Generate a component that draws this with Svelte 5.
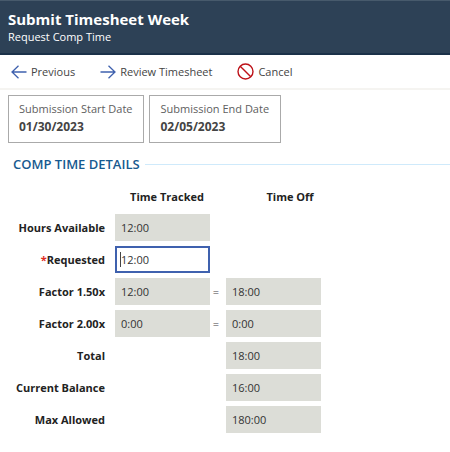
<script>
  const dates = [
    { label: 'Submission Start Date', value: '01/30/2023' },
    { label: 'Submission End Date', value: '02/05/2023' }
  ];

  let requested = $state('12:00');

  const rows = [
    { id: 'available', label: 'Hours Available', tracked: '12:00' },
    { id: 'requested', label: 'Requested', required: true },
    { id: 'factor150', label: 'Factor 1.50x', tracked: '12:00', off: '18:00' },
    { id: 'factor200', label: 'Factor 2.00x', tracked: '0:00', off: '0:00' },
    { id: 'total', label: 'Total', off: '18:00' },
    { id: 'balance', label: 'Current Balance', off: '16:00' },
    { id: 'max', label: 'Max Allowed', off: '180:00' }
  ];
</script>

<div class="page">
  <header>
    <h1>Submit Timesheet Week</h1>
    <p>Request Comp Time</p>
  </header>

  <nav>
    <button type="button">
      <svg class="arrow" width="16" height="14" viewBox="0 0 16 14"><path d="M15.5 7H1M7.5 .7L1 7l6.500 6.300" /></svg>
      Previous
    </button>
    <button type="button">
      <svg class="arrow" width="16" height="14" viewBox="0 0 16 14"><path d="M.5 7H15M8.500 .7L15 7l-6.500 6.300" /></svg>
      Review Timesheet
    </button>
    <button type="button">
      <svg class="stop" width="17" height="17" viewBox="0 0 17 17"><circle cx="8.500" cy="8.500" r="7.500" /><path d="M3.200 3.200L13.800 13.800" /></svg>
      Cancel
    </button>
  </nav>

  <main>
    <dl class="dates">
      {#each dates as date}
        <div class="card">
          <dt>{date.label}</dt>
          <dd>{date.value}</dd>
        </div>
      {/each}
    </dl>

    <section>
      <h2>COMP TIME DETAILS</h2>
      <form>
        <div class="row head">
          <span></span>
          <strong>Time Tracked</strong>
          <span></span>
          <strong>Time Off</strong>
        </div>
        {#each rows as row}
          <div class="row">
            <label for={row.id}>{#if row.required}<span class="star">*</span>{/if}{row.label}</label>
            {#if row.required}
              <div class="active"><input id={row.id} bind:value={requested} required /></div>
            {:else if row.tracked}
              <input id={row.id} value={row.tracked} readonly />
            {:else}
              <span></span>
            {/if}
            <span class="equals">{row.tracked && row.off ? '=' : ''}</span>
            {#if row.off}
              <input id={row.tracked ? row.id + '-off' : row.id} value={row.off} aria-label={row.label + ' time off'} readonly />
            {/if}
          </div>
        {/each}
      </form>
    </section>
  </main>
</div>

<style>
  :global(body) {
    background: #fff;
  }

  .page {
    font-family: 'Segoe UI', 'Open Sans', 'Noto Sans', sans-serif;
    font-size: 11px;
    line-height: 18px;
    color: #222;
  }

  h1, h2, p, dl, dd {
    margin: 0;
  }

  header {
    box-sizing: border-box;
    height: 55px;
    padding: 9px 8px 0;
    color: #fff;
    background: #2d4156;
    border-top: 1px solid #475a6c;
    border-bottom: 2px solid #1b3149;
  }

  h1 {
    font-size: 15px;
    line-height: 18px;
    font-weight: 700;
  }

  nav {
    display: flex;
    align-items: center;
    gap: 25px;
    height: 33px;
    padding: 0 11px;
    border-bottom: 2px solid #f5f4f1;
  }

  button {
    display: flex;
    align-items: center;
    gap: 4px;
    padding: 0;
    border: 0;
    background: none;
    font: inherit;
    color: #444;
    white-space: nowrap;
  }

  svg {
    flex: none;
    fill: none;
  }

  .arrow {
    stroke: #3f61ae;
    stroke-width: 1.3;
  }

  .stop {
    stroke: #bd1118;
    stroke-width: 1.400;
  }

  .dates {
    display: flex;
    gap: 5px;
    padding: 5px 8px 0;
  }

  .card {
    box-sizing: border-box;
    height: 48px;
    padding: 4px 11px 4px 10px;
    border: 1px solid #aaa;
    white-space: nowrap;
  }

  dt {
    color: #606060;
  }

  dd {
    font-size: 12px;
    font-weight: 700;
    color: #444;
  }

  section {
    padding: 12px 0 0 13px;
  }

  h2 {
    display: flex;
    align-items: center;
    gap: 5px;
    font-size: 13px;
    line-height: 18px;
    font-weight: 600;
    color: #175a90;
  }

  h2::after {
    content: '';
    flex: 1;
    height: 1px;
    background: #cfeafb;
  }

  form {
    display: flex;
    flex-direction: column;
    gap: 5px;
    padding-top: 12px;
  }

  .row {
    display: grid;
    grid-template-columns: 102px 95px 16px 95px;
    align-items: center;
    height: 27px;
  }

  .row.head {
    grid-template-columns: 102px 104px 7px 128px;
    height: 24px;
    text-align: center;
  }

  strong,
  label {
    font-weight: 700;
    color: #222;
  }

  label {
    padding-right: 10px;
    text-align: right;
    white-space: nowrap;
  }

  .star {
    color: #e02a1f;
  }

  .equals {
    padding-right: 4px;
    text-align: center;
    color: #444;
  }

  input {
    box-sizing: border-box;
    width: 95px;
    height: 27px;
    padding: 0 6px;
    border: 0;
    border-radius: 0;
    outline: 0;
    background: #dcddd7;
    font: inherit;
    color: #333;
  }

  .active {
    position: relative;
    height: 27px;
  }

  .active input {
    padding: 0 4px;
    border: 2px solid #3f61ae;
    background: #fff;
  }

  .active::before {
    content: '';
    position: absolute;
    left: 5px;
    top: 6px;
    width: 1px;
    height: 15px;
    background: #444;
  }
</style>
